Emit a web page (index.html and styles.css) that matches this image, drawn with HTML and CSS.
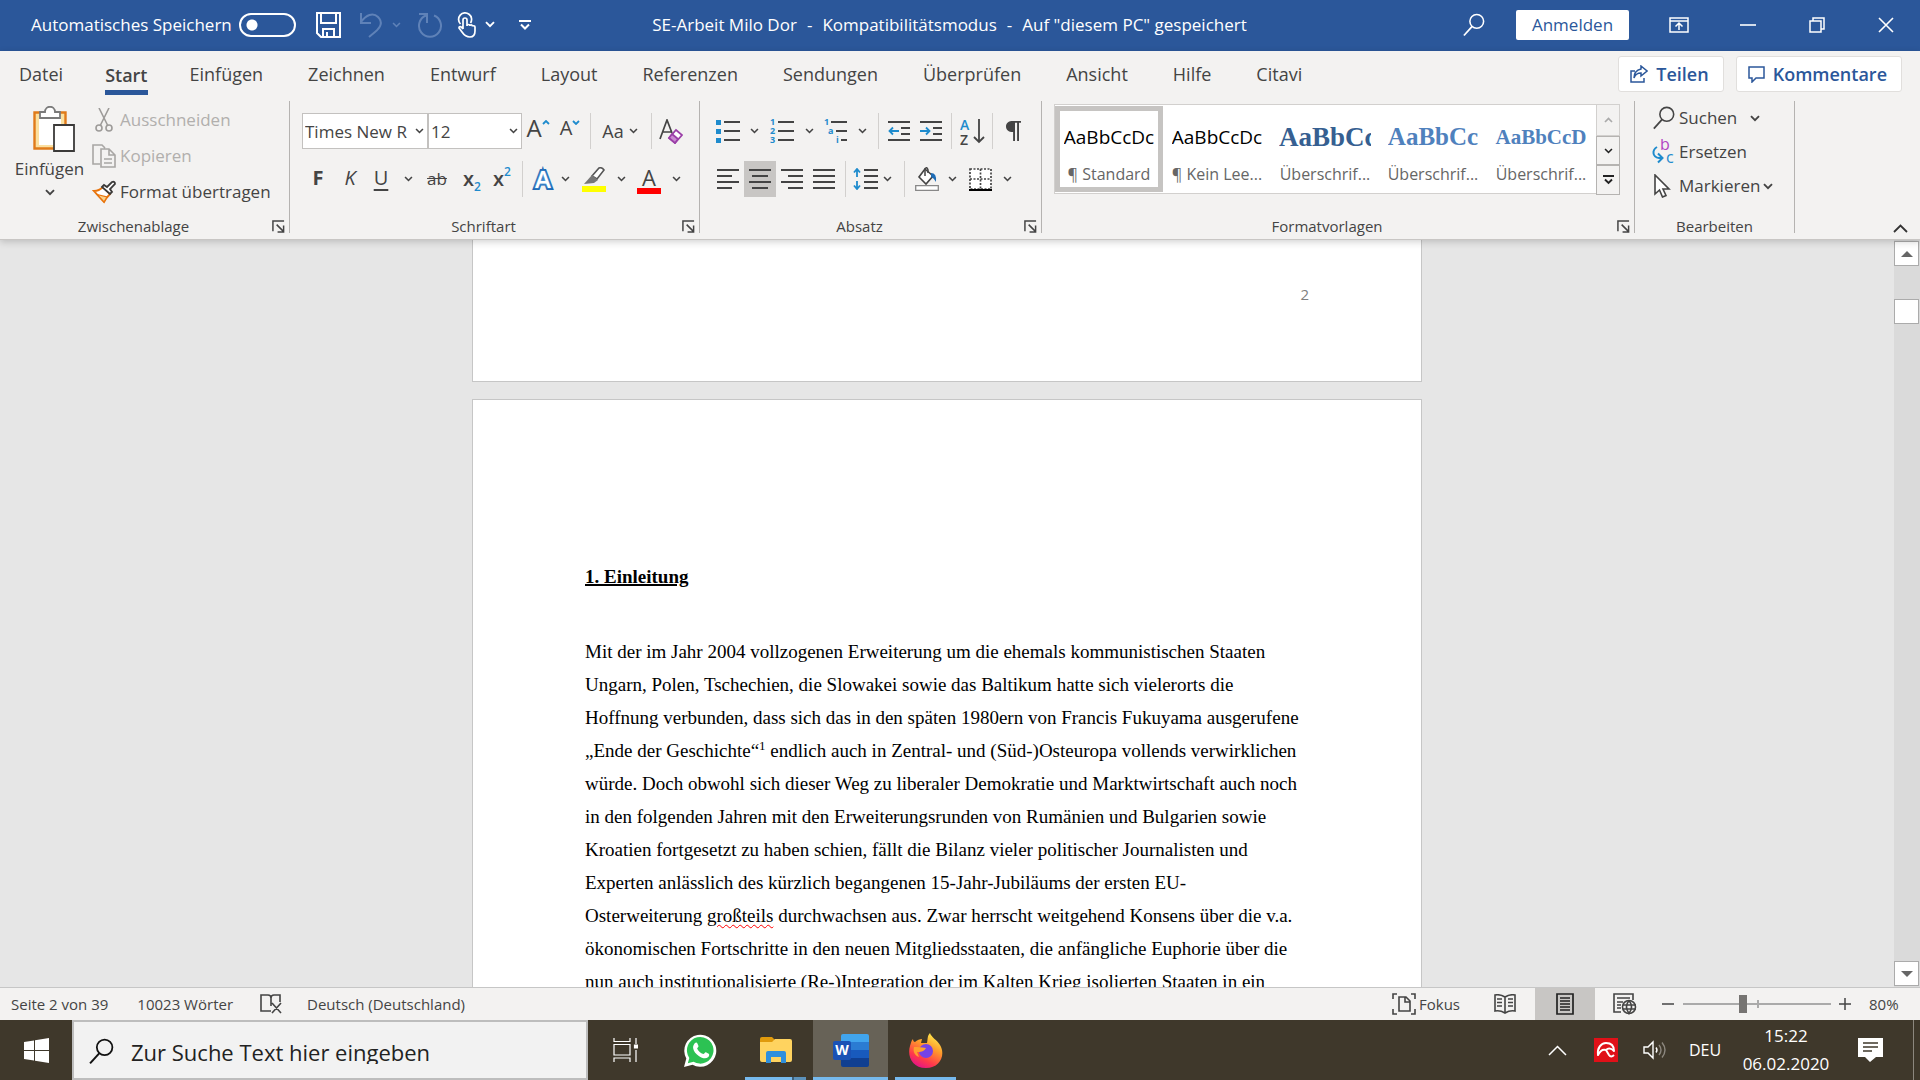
FILE: index.html
```html
<!DOCTYPE html>
<html lang="de">
<head>
<meta charset="utf-8">
<title>SE-Arbeit Milo Dor</title>
<link rel="stylesheet" href="styles.css">
</head>
<body>
<svg class="defs" aria-hidden="true">
  <symbol id="chev" viewBox="0 0 10 7"><path d="M1 1.2 5 5.2 9 1.2" fill="none" stroke="currentColor" stroke-width="1.9"/></symbol>
  <symbol id="launch" viewBox="0 0 14 14"><path d="M1 12V1h12M5 5l7 7M12.500 6v7H6" fill="none" stroke="currentColor" stroke-width="1.6"/></symbol>
  <symbol id="lens" viewBox="0 0 24 26"><circle cx="15" cy="9" r="7.500" fill="none" stroke="currentColor" stroke-width="1.7"/><path d="M10 14.500 1 24.500" stroke="currentColor" stroke-width="1.9"/></symbol>
</svg>

<header class="titlebar">
  <div class="quick">
    <label class="autosave">Automatisches Speichern <input type="checkbox" class="toggle"></label>
    <button class="q-save" aria-label="Speichern"><svg width="25" height="26" viewBox="0 0 25 26" fill="none" stroke="#fff" stroke-width="2"><path d="M1 1h23v24H5l-4-4zM5 1v10h15V1M7 25v-8h11v8M11 25v-5"/></svg></button>
    <button class="q-undo dim" aria-label="Rückgängig"><svg width="24" height="26" viewBox="0 0 24 26" fill="none" stroke="currentColor" stroke-width="2"><path d="M2 1v10h10M2 10C7 3 14 0 19 5s3 10-3 15l-6 5"/></svg></button>
    <button class="q-chev dim" aria-label="Rückgängig-Verlauf"><svg width="9" height="6"><use href="#chev"/></svg></button>
    <button class="q-redo dim" aria-label="Wiederholen"><svg width="26" height="26" viewBox="0 0 26 26" fill="none" stroke="currentColor" stroke-width="2"><path d="M2 2h8v9M9 3.500A11 11 0 1 0 17 3.500"/></svg></button>
    <button class="q-touch" aria-label="Touch-/Mausmodus"><svg width="19" height="26" viewBox="0 0 19 26" fill="none" stroke="#fff" stroke-width="1.700"><path d="M3.500 12A6.500 6.500 0 1 1 13.500 11M6 17V8a1.800 1.800 0 0 1 4 0v6c0-2 3-2 3 0 0-1.500 2.500-1.500 2.500.5 0-1 2.500-1 2.500.5v4c0 4-2 6-5 6-4 0-6-2-8-5l-3-4c0-2 2-2 4 1"/></svg></button>
    <button class="q-chev" aria-label="Modus wählen"><svg width="10" height="7"><use href="#chev"/></svg></button>
    <button class="q-more" aria-label="Symbolleiste anpassen"><svg width="12" height="10" viewBox="0 0 12 10" fill="none" stroke="#fff" stroke-width="2"><path d="M0 1h12M2 4.500l4 4 4-4"/></svg></button>
  </div>
  <h1 class="doc-title"><span>SE-Arbeit Milo Dor</span><span>-</span><span>Kompatibilitätsmodus</span><span>-</span><span>Auf "diesem PC" gespeichert</span></h1>
  <div class="window-tools">
    <button class="find" aria-label="Suchen"><svg width="22" height="26"><use href="#lens"/></svg></button>
    <button class="signin">Anmelden</button>
    <button class="win" aria-label="Menüband-Anzeigeoptionen"><svg width="20" height="16" viewBox="0 0 20 16" fill="none" stroke="#fff" stroke-width="1.500"><path d="M1 1h18v14H1zM1 4h18M10 13V6.500M6.500 9.500l3.500-3.500 3.500 3.500"/></svg></button>
    <button class="win" aria-label="Minimieren"><svg width="16" height="16"><path d="M0 8h16" stroke="#fff" stroke-width="1.600"/></svg></button>
    <button class="win" aria-label="Verkleinern"><svg width="16" height="16" fill="none" stroke="#fff" stroke-width="1.500"><path d="M1 4h11v11H1zM4 4V1h11v11h-3"/></svg></button>
    <button class="win" aria-label="Schließen"><svg width="16" height="16"><path d="m1 1 14 14M15 1 1 15" stroke="#fff" stroke-width="1.600"/></svg></button>
  </div>
</header>

<section class="ribbon">
  <nav class="tabs">
    <a href="#">Datei</a><a href="#" class="active" aria-current="page">Start</a><a href="#">Einfügen</a><a href="#">Zeichnen</a><a href="#">Entwurf</a><a href="#">Layout</a><a href="#">Referenzen</a><a href="#">Sendungen</a><a href="#">Überprüfen</a><a href="#">Ansicht</a><a href="#">Hilfe</a><a href="#">Citavi</a>
    <div class="share">
      <button><svg width="18" height="18" viewBox="0 0 18 18" fill="none" stroke="currentColor" stroke-width="1.500"><path d="M5 6H1v11h13v-4M11 1l6 5-6 5V8C7 8 5 10 4 13c0-5 3-8 7-9z"/></svg>Teilen</button>
      <button><svg width="17" height="17" viewBox="0 0 17 17" fill="none" stroke="currentColor" stroke-width="1.500"><path d="M1 1h15v11H8l-4 4v-4H1z"/></svg>Kommentare</button>
    </div>
  </nav>

  <div class="groups">
    <div class="group g-clip">
      <div class="clip-body">
        <button class="paste">
          <svg class="board" width="42" height="46" viewBox="0 0 42 46"><path d="M1.500 6.500h31v36h-31z" fill="#fbe0a0" stroke="#e07b1a" stroke-width="2.400"/><path d="M6 10h22v29H6z" fill="#fff"/><path d="M7 12V6h5c0-7 10-7 10 0h5v6z" fill="#fff" stroke="#7a7a7a" stroke-width="1.800"/><path d="M21 19h20v26H21z" fill="#fff" stroke="#3b3a39" stroke-width="1.800"/></svg>
          <span>Einfügen</span>
          <svg width="10" height="7"><use href="#chev"/></svg>
        </button>
        <div class="clip-list">
          <button disabled><svg width="24" height="24" viewBox="0 0 24 24" fill="none" stroke="#9d9b99" stroke-width="1.600"><path d="M7 0l9 18M17 0 8 18"/><circle cx="7" cy="20" r="3"/><circle cx="17" cy="20" r="3"/></svg>Ausschneiden</button>
          <button disabled><svg width="24" height="24" viewBox="0 0 24 24" fill="none" stroke="#a8a6a4" stroke-width="1.600"><path d="M8 20H1V1h9l3 3M9 5h8l6 6v12H9zM17 5v6h6M12 15h8M12 19h8"/></svg>Kopieren</button>
          <button><svg width="24" height="24" viewBox="0 0 24 24" fill="none" stroke-width="1.800"><path d="M2 11q5 0 9-4l7 7q-4 4-6 8z" fill="#fff" stroke="#e8740c"/><path d="M5 14.500l10 2.500-3 5z" fill="#fbd28a" stroke="#e8740c" stroke-width="1.200"/><path d="M10 7l2-2 3 2 5-5q3-1 3 2l-5 5 2 3-2 2z" fill="#fff" stroke="#3b3a39"/></svg>Format übertragen</button>
        </div>
      </div>
      <footer><span>Zwischenablage</span><button aria-label="Zwischenablage öffnen"><svg width="13" height="13"><use href="#launch"/></svg></button></footer>
    </div>

    <div class="group g-font">
      <div class="rows">
        <div class="row font-1">
          <label class="combo"><select aria-label="Schriftart"><option>Times New R</option></select><svg width="9" height="6"><use href="#chev"/></svg></label>
          <label class="combo"><select aria-label="Schriftgrad"><option>12</option></select><svg width="9" height="6"><use href="#chev"/></svg></label>
          <button class="grow" aria-label="Schrift vergrößern">A<svg width="8" height="5" viewBox="0 0 8 5"><path d="M1 4l3-3 3 3" fill="none" stroke="#1e8bcd" stroke-width="1.800"/></svg></button>
          <button class="grow small" aria-label="Schrift verkleinern">A<svg width="8" height="5" viewBox="0 0 8 5"><path d="M1 1l3 3 3-3" fill="none" stroke="#1e8bcd" stroke-width="1.800"/></svg></button>
          <i class="sep"></i>
          <button class="case">Aa<svg width="9" height="6"><use href="#chev"/></svg></button>
          <i class="sep"></i>
          <button aria-label="Formatierung löschen"><svg width="24" height="25" viewBox="0 0 24 25" fill="none" stroke-width="1.700"><path d="M1 20 8 1l5 13M3 13h9" stroke="#444"/><path d="M17 11l6 5-7 8-6-5z" fill="#fff" stroke="#9b3fa8"/><path d="M13 15l6 5-3 4-6-5z" fill="#c98ad1" stroke="#9b3fa8"/></svg></button>
        </div>
        <div class="row font-2">
          <button class="bold">F</button>
          <button class="ital">K</button>
          <button class="under">U</button>
          <button aria-label="Unterstreichungsart"><svg width="9" height="6"><use href="#chev"/></svg></button>
          <button class="strike">ab</button>
          <button class="script">x<sub>2</sub></button>
          <button class="script">x<sup>2</sup></button>
          <i class="sep"></i>
          <button class="fx">A</button>
          <button aria-label="Texteffekte wählen"><svg width="9" height="6"><use href="#chev"/></svg></button>
          <button aria-label="Texthervorhebungsfarbe"><svg width="24" height="25" viewBox="0 0 24 25"><path d="M10 9l7-8q3-1 5 2l-7 9z" fill="#fff" stroke="#555" stroke-width="1.600"/><path d="M10 8l6 5-4 3-10 1z" fill="#777"/><path d="M0 19h24v6H0z" fill="#ff0"/></svg></button>
          <button aria-label="Hervorhebungsfarbe wählen"><svg width="9" height="6"><use href="#chev"/></svg></button>
          <button class="fcolor">A</button>
          <button aria-label="Schriftfarbe wählen"><svg width="9" height="6"><use href="#chev"/></svg></button>
        </div>
      </div>
      <footer><span>Schriftart</span><button aria-label="Schriftart öffnen"><svg width="13" height="13"><use href="#launch"/></svg></button></footer>
    </div>

    <div class="group g-para">
      <div class="rows">
        <div class="row para-1">
          <button aria-label="Aufzählungszeichen"><svg width="24" height="24" viewBox="0 0 24 24"><path d="M0 1h5v5H0zM0 10h5v5H0zM0 19h5v5H0z" fill="#1e8bcd"/><path d="M8 3h16M8 12h16M8 21h16" stroke="#444" stroke-width="1.800"/></svg></button>
          <button aria-label="Aufzählungszeichen wählen"><svg width="9" height="6"><use href="#chev"/></svg></button>
          <button aria-label="Nummerierung"><svg class="nums" width="24" height="24" viewBox="0 0 24 24"><text x="0" y="6">1</text><text x="0" y="15">2</text><text x="0" y="24">3</text><path d="M8 3h16M8 12h16M8 21h16" stroke="#444" stroke-width="1.800"/></svg></button>
          <button aria-label="Nummerierung wählen"><svg width="9" height="6"><use href="#chev"/></svg></button>
          <button aria-label="Liste mit mehreren Ebenen"><svg class="nums" width="24" height="24" viewBox="0 0 24 24"><text x="0" y="6">1</text><text x="4" y="15">a</text><text x="12" y="24">i</text><path d="M7 3h16M12 12h11M17 21h6" stroke="#444" stroke-width="1.800"/></svg></button>
          <button aria-label="Ebene wählen"><svg width="9" height="6"><use href="#chev"/></svg></button>
          <i class="sep"></i>
          <button aria-label="Einzug verkleinern"><svg width="22" height="22" viewBox="0 0 22 22" fill="none" stroke="#444" stroke-width="1.800"><path d="M0 2h22M13 8h9M13 14h9M0 20h22"/><path d="M11 11H2M5 7.500 1.500 11 5 14.500" stroke="#1e8bcd"/></svg></button>
          <button aria-label="Einzug vergrößern"><svg width="22" height="22" viewBox="0 0 22 22" fill="none" stroke="#444" stroke-width="1.800"><path d="M0 2h22M13 8h9M13 14h9M0 20h22"/><path d="M0 11h9M6 7.500 9.500 11 6 14.500" stroke="#1e8bcd"/></svg></button>
          <i class="sep"></i>
          <button aria-label="Sortieren"><svg class="sort" width="25" height="27" viewBox="0 0 25 27"><text x="0" y="12" fill="#1e8bcd">A</text><text x="0" y="27" fill="#444">Z</text><path d="M19 1v23M14 19l5 5 5-5" fill="none" stroke="#444" stroke-width="1.800"/></svg></button>
          <i class="sep"></i>
          <button aria-label="Alle anzeigen"><svg width="15" height="20" viewBox="0 0 15 20"><path d="M15 0v1.800h-2V20h-1.900V1.800H9V20H7.100V11C2.500 11 0 9 0 5.500S2.500 0 7 0z" fill="#444"/></svg></button>
        </div>
        <div class="row para-2">
          <button aria-label="Linksbündig"><svg width="22" height="20"><path d="M0 1h22M0 7h15M0 13h22M0 19h15" stroke="#444" stroke-width="1.800"/></svg></button>
          <button class="on" aria-label="Zentriert"><svg width="22" height="20"><path d="M0 1h22M3 7h16M0 13h22M3 19h16" stroke="#444" stroke-width="1.800"/></svg></button>
          <button aria-label="Rechtsbündig"><svg width="22" height="20"><path d="M0 1h22M7 7h15M0 13h22M7 19h15" stroke="#444" stroke-width="1.800"/></svg></button>
          <button aria-label="Blocksatz"><svg width="22" height="20"><path d="M0 1h22M0 7h22M0 13h22M0 19h22" stroke="#444" stroke-width="1.800"/></svg></button>
          <i class="sep"></i>
          <button aria-label="Zeilenabstand"><svg width="25" height="22" viewBox="0 0 25 22" fill="none" stroke="#444" stroke-width="1.800"><path d="M11 2h14M11 8h14M11 14h14M11 20h14"/><path d="M4 1v8M1 4.500 4 1l3 3.500M4 13v8M1 17.500 4 21l3-3.500" stroke="#1e8bcd"/></svg></button>
          <button aria-label="Zeilenabstand wählen"><svg width="9" height="6"><use href="#chev"/></svg></button>
          <i class="sep"></i>
          <button aria-label="Schattierung"><svg width="24" height="24" viewBox="0 0 24 24"><path d="M10 2l8 7-7 8-7-7z" fill="#fff" stroke="#444" stroke-width="1.600"/><path d="M10 9V2q2-3 3 1v3" fill="none" stroke="#444" stroke-width="1.500"/><path d="M16 6q6 0 5 9-2-4-5-5z" fill="#1e6cb5"/><path d="M.7 18.700h22.600v4.600H.7z" fill="#fff" stroke="#888" stroke-width="1.300"/></svg></button>
          <button aria-label="Schattierung wählen"><svg width="9" height="6"><use href="#chev"/></svg></button>
          <button aria-label="Rahmen"><svg width="23" height="23" viewBox="0 0 23 23"><path d="M1 1h21v20H1zM11.500 1v20M1 11h21" fill="#fff" stroke="#444" stroke-width="1.700" stroke-dasharray="2 1.500"/><path d="M0 22h23" stroke="#000" stroke-width="2"/></svg></button>
          <button aria-label="Rahmen wählen"><svg width="9" height="6"><use href="#chev"/></svg></button>
        </div>
      </div>
      <footer><span>Absatz</span><button aria-label="Absatz öffnen"><svg width="13" height="13"><use href="#launch"/></svg></button></footer>
    </div>

    <div class="group g-styles">
      <div class="gallery">
        <button class="style picked"><b>AaBbCcDc</b><span>¶ Standard</span></button>
        <button class="style"><b>AaBbCcDc</b><span>¶ Kein Lee...</span></button>
        <button class="style h-one"><b>AaBbCc</b><span>Überschrif...</span></button>
        <button class="style h-two"><b>AaBbCc</b><span>Überschrif...</span></button>
        <button class="style h-three"><b>AaBbCcD</b><span>Überschrif...</span></button>
        <div class="gal-scroll">
          <button disabled aria-label="Nach oben"><svg width="9" height="6" viewBox="0 0 9 6"><path d="M1 5l3.500-3.500L8 5" fill="none" stroke="#aaa" stroke-width="1.700"/></svg></button>
          <button aria-label="Nach unten"><svg width="9" height="6"><use href="#chev"/></svg></button>
          <button aria-label="Mehr"><svg width="11" height="10" viewBox="0 0 11 10" fill="none" stroke="#222" stroke-width="1.900"><path d="M0 1h11M2 4.500 5.500 8 9 4.500"/></svg></button>
        </div>
      </div>
      <footer><span>Formatvorlagen</span><button aria-label="Formatvorlagen öffnen"><svg width="13" height="13"><use href="#launch"/></svg></button></footer>
    </div>

    <div class="group g-edit">
      <div class="edit-list">
        <button><svg width="24" height="24"><use href="#lens"/></svg>Suchen<svg class="far" width="10" height="7"><use href="#chev"/></svg></button>
        <button><svg class="swap" width="24" height="26" viewBox="0 0 24 26"><text x="8" y="11" fill="#b146c2">b</text><text x="14" y="24" fill="#1e8bcd">c</text><path d="M5 8c-5 3-5 10 2 11h3M6 14.500l4.500 4.500L6 23.500" fill="none" stroke="#1e8bcd" stroke-width="2"/></svg>Ersetzen</button>
        <button><svg width="24" height="24" viewBox="0 0 24 24"><path d="M3 1v19l4.500-4 3 7 3.500-1.500-3-6.500H17z" fill="#fff" stroke="#444" stroke-width="1.600"/></svg>Markieren<svg width="10" height="7"><use href="#chev"/></svg></button>
      </div>
      <footer><span>Bearbeiten</span></footer>
    </div>
    <button class="collapse" aria-label="Menüband reduzieren"><svg width="15" height="9" viewBox="0 0 15 9"><path d="M1 8l6.500-6.500L14 8" fill="none" stroke="#333" stroke-width="1.800"/></svg></button>
  </div>
</section>

<main class="workspace">
  <div class="canvas">
    <article class="page page-end"><p class="folio">2</p></article>
    <article class="page page-text">
      <h2>1. Einleitung</h2>
      <p>Mit der im Jahr 2004 vollzogenen Erweiterung um die ehemals kommunistischen Staaten<br>
      Ungarn, Polen, Tschechien, die Slowakei sowie das Baltikum hatte sich vielerorts die<br>
      Hoffnung verbunden, dass sich das in den späten 1980ern von Francis Fukuyama ausgerufene<br>
      „Ende der Geschichte“<sup>1</sup> endlich auch in Zentral- und (Süd-)Osteuropa vollends verwirklichen<br>
      würde. Doch obwohl sich dieser Weg zu liberaler Demokratie und Marktwirtschaft auch noch<br>
      in den folgenden Jahren mit den Erweiterungsrunden von Rumänien und Bulgarien sowie<br>
      Kroatien fortgesetzt zu haben schien, fällt die Bilanz vieler politischer Journalisten und<br>
      Experten anlässlich des kürzlich begangenen 15-Jahr-Jubiläums der ersten EU-<br>
      Osterweiterung <span class="typo">großteils</span> durchwachsen aus. Zwar herrscht weitgehend Konsens über die v.a.<br>
      ökonomischen Fortschritte in den neuen Mitgliedsstaaten, die anfängliche Euphorie über die<br>
      nun auch institutionalisierte (Re-)Integration der im Kalten Krieg isolierten Staaten in ein</p>
    </article>
  </div>
  <div class="scroller">
    <button aria-label="Nach oben"><svg width="12" height="6"><path d="M0 6 6 0l6 6z" fill="#666"/></svg></button>
    <div class="track"><div class="thumb"></div></div>
    <button aria-label="Nach unten"><svg width="12" height="6"><path d="M0 0l6 6 6-6z" fill="#666"/></svg></button>
  </div>
</main>

<footer class="status">
  <span class="s-page">Seite 2 von 39</span>
  <span class="s-words">10023 Wörter</span>
  <svg class="s-proof" width="22" height="20" viewBox="0 0 22 20" fill="none" stroke="#444" stroke-width="1.600"><path d="M11 17H1V1h7q3 0 3 3v8M11 4q0-3 3-3h6v7M12 9l9 10M21 9l-9 10"/></svg>
  <span>Deutsch (Deutschland)</span>
  <button class="focus"><svg width="24" height="22" viewBox="0 0 24 22" fill="none" stroke="#444" stroke-width="1.600"><path d="M5 1H1v5M19 1h4v5M5 21H1v-5M19 21h4v-5M7 4h7l4 4v10H7zM13 4v5h5"/></svg>Fokus</button>
  <button class="view" aria-label="Lesemodus"><svg width="22" height="20" viewBox="0 0 22 20" fill="none" stroke="#444" stroke-width="1.600"><path d="M11 3Q6 0 1 1v16q5-1 10 2 5-3 10-2V1q-5-1-10 2zv16M3 5h5M3 8.500h5M3 12h5M14 5h5M14 8.500h5M14 12h5"/></svg></button>
  <button class="view on" aria-label="Seitenlayout"><svg width="18" height="22" viewBox="0 0 18 22" fill="none" stroke="#222" stroke-width="1.700"><path d="M1 1h16v20H1zM4 5h10M4 8h10M4 11h10M4 14h10M4 17h10"/></svg></button>
  <button class="view" aria-label="Weblayout"><svg width="24" height="22" viewBox="0 0 24 22" fill="none" stroke="#444" stroke-width="1.600"><path d="M8 19H1V1h19v6M4 5h13M4 9h6M4 12h4M4 15h4"/><circle cx="16" cy="14" r="6.500"/><path d="M10 12h13M10 16h13M16 7.500q-5 6 0 13 5-7 0-13"/></svg></button>
  <button class="step" aria-label="Verkleinern"><svg width="12" height="12"><path d="M0 6h12" stroke="#444" stroke-width="1.500"/></svg></button>
  <input type="range" class="zoom" min="0" max="100" value="40" aria-label="Zoom">
  <button class="step" aria-label="Vergrößern"><svg width="12" height="12"><path d="M0 6h12M6 0v12" stroke="#444" stroke-width="1.500"/></svg></button>
  <span class="pct">80%</span>
</footer>

<footer class="taskbar">
  <button class="start" aria-label="Start"><svg width="25" height="25" viewBox="0 0 25 25" fill="#fff"><path d="M0 4l10-1.500V12H0zM11 2.300 25 0v12H11zM0 13h10v9.500L0 21zM11 13h14v12l-14-2.300z"/></svg></button>
  <label class="search"><svg width="25" height="27"><use href="#lens"/></svg><input type="text" placeholder="Zur Suche Text hier eingeben" aria-label="Suche"></label>
  <button class="task" aria-label="Taskansicht"><svg width="25" height="24" viewBox="0 0 25 24" fill="none" stroke="#fff" stroke-width="1.200"><path d="M1 0v3.500h16V0M1 6.500h16v10.500H1zM1 24v-4h16v4M23 0v6M23 12v12"/><path d="M21.500 7h3v3h-3z" fill="#fff"/></svg></button>
  <button class="task" aria-label="WhatsApp"><svg width="33" height="33" viewBox="0 0 33 33"><path d="M0 33l2.300-8.500A16 16 0 1 1 8.500 30.700z" fill="#fff"/><path d="M3.800 29.200l1.500-5.300A13.300 13.300 0 1 1 9.500 27.800z" fill="#2cc253"/><path d="M11 9c1-1 2-.6 2.400.4l1.100 2.700c.2.800-1.500 2-1.300 2.600 1.300 2.700 3.300 4.400 6.100 5.400.8.200 1.700-2.200 2.600-1.800l2.800 1.400c1 .5.500 2.600-.7 3.600-2.400 2-6 .9-9.200-1.300-3-2-5.300-5-5.700-8-.2-2 .8-3.900 1.900-5z" fill="#fff"/></svg></button>
  <button class="task open stacked" aria-label="Explorer"><svg width="32" height="27" viewBox="0 0 32 27"><path d="M0 2q0-2 2-2h10l3 3v4H0z" fill="#e09a0c"/><path d="M0 5h12l3-3h15q2 0 2 2v19q0 2-2 2H2q-2 0-2-2z" fill="#ffd35f"/><path d="M6 26V16q0-2 2-2h16q2 0 2 2v10h-5v-6H11v6z" fill="#2f8fdc"/></svg></button>
  <button class="task open current" aria-label="Word"><svg width="36" height="33" viewBox="0 0 36 33"><path d="M10 0h24q2 0 2 2v7H8V2q0-2 2-2z" fill="#41a5ee"/><path d="M8 8h28v9H8z" fill="#2b7cd3"/><path d="M8 16h28v8H8z" fill="#185abd"/><path d="M8 24h28v7q0 2-2 2H10q-2 0-2-2z" fill="#103f91"/><rect y="7" width="18" height="19" rx="2" fill="#1a52b5"/><text x="9" y="21" text-anchor="middle" class="word-w">W</text></svg></button>
  <button class="task open" aria-label="Firefox"><svg width="34" height="35" viewBox="0 0 34 35"><defs><linearGradient id="ff" x1=".8" y1="0" x2=".3" y2="1"><stop offset="0" stop-color="#fff44f"/><stop offset=".4" stop-color="#ff9a2b"/><stop offset=".75" stop-color="#ff3a4a"/><stop offset="1" stop-color="#e3128a"/></linearGradient></defs><path d="M21 0c1 4 7 7 10 12 6 10 0 23-14 23S-2 23 1 13c1-3 1-5 3-7 0 2 1 3 2 3 2-2 5-3 7-3l-1 4 6 0c1-4 0-7 3-10z" fill="url(#ff)"/><circle cx="17" cy="18" r="7" fill="#7543e5"/><path d="M5 14c4 0 7 0 12 1-2 4-6 4-9 4l2 5c-5-2-6-6-5-10z" fill="#ffa02e"/></svg></button>
  <div class="tray">
    <button class="t-up" aria-label="Ausgeblendete Symbole"><svg width="19" height="11" viewBox="0 0 19 11"><path d="M1 10l8.500-8.500L18 10" fill="none" stroke="#fff" stroke-width="1.500"/></svg></button>
    <button class="t-av" aria-label="Avira"><svg width="24" height="24" viewBox="0 0 24 24"><path d="M0 0h24v24H0z" fill="#e01018"/><path d="M4 17C3 10 7 5 12 5c5 0 8 3 8 8-3-3-6-3-8-1-3-1-6 1-8 5zM12 12l3 5q2 3 5 0" fill="none" stroke="#fff" stroke-width="2" stroke-linejoin="round"/></svg></button>
    <button class="t-vol" aria-label="Lautstärke"><svg width="24" height="20" viewBox="0 0 24 20" fill="none" stroke="#fff" stroke-width="1.400"><path d="M1 7h4l5-5v16l-5-5H1zM13 7.500q2 2.500 0 5"/><path d="M16 5q4 5 0 10M19 2.500q6 7.500 0 15" stroke="#8c877e"/></svg></button>
    <span class="lang">DEU</span>
    <time class="clock"><span>15:22</span><span>06.02.2020</span></time>
    <button class="t-note" aria-label="Benachrichtigungen"><svg width="25" height="24" viewBox="0 0 25 24"><path d="M0 0h25v19h-7l-6 5-5-5H0z" fill="#fff"/><path d="M5 5h15M5 9h15M5 13h9" stroke="#3f382b" stroke-width="1.300"/></svg></button>
    <i class="peek"></i>
  </div>
</footer>
</body>
</html>
```
FILE: styles.css
```css
* { box-sizing: border-box; }

body {
  margin: 0;
  height: 100vh;
  display: flex;
  flex-direction: column;
  overflow: hidden;
  background: #e6e6e6;
  color: #444;
  font: 17px/24px "Open Sans", "Noto Sans", sans-serif;
}

button, input, select { font: inherit; color: inherit; }
button {
  display: flex;
  align-items: center;
  justify-content: center;
  padding: 0;
  border: 0;
  background: none;
  white-space: nowrap;
}
svg { flex: none; display: block; }
.defs { position: absolute; width: 0; height: 0; }
p, h1, h2 { margin: 0; }

/* Title bar */
.titlebar {
  display: grid;
  grid-template-columns: 1fr auto 1fr;
  align-items: center;
  height: 51px;
  padding-bottom: 2px;
  background: #2b579a;
  color: #fff;
}
.quick { display: flex; align-items: center; padding-left: 31px; }
.autosave { display: flex; align-items: center; gap: 7px; white-space: nowrap; }
.toggle {
  appearance: none;
  width: 57px;
  height: 24px;
  margin: 0;
  border: 2px solid #fff;
  border-radius: 12px;
  background: radial-gradient(circle 6px at 11px 10px, #fff 5px, transparent 6px);
}
.q-save { margin-left: 20px; }
.q-undo { margin-left: 18px; }
.q-chev { margin-left: 9px; }
.q-redo { margin-left: 16px; }
.q-touch { margin-left: 14px; }
.q-more { margin-left: 24px; }
.dim { color: #5f82b8; }
.doc-title {
  display: flex;
  gap: 10px;
  margin-right: 21px;
  font-size: 17px;
  font-weight: 400;
  white-space: nowrap;
}
.window-tools { display: flex; align-items: center; justify-content: flex-end; }
.find { width: 60px; }
.signin {
  width: 113px;
  height: 30px;
  margin: 0 15px 0 12px;
  border-radius: 2px;
  background: #fff;
  color: #2b579a;
}
.win { width: 69px; height: 48px; }

/* Ribbon */
.ribbon {
  position: relative;
  z-index: 1;
  background: #f3f2f1;
  border-bottom: 1px solid #c8c6c4;
  box-shadow: 0 2px 7px rgba(0, 0, 0, .18);
}
.tabs {
  display: flex;
  align-items: center;
  gap: 45px;
  height: 46px;
  padding: 0 18px 0 19px;
  font-size: 18px;
}
.tabs a {
  display: flex;
  height: 42px;
  padding-top: 9px;
  color: #444;
  text-decoration: none;
}
.tabs .active { height: 41px; border-bottom: 5px solid #2b579a; font-weight: 600; margin-right: -3px; margin-left: -3px; }
.share { display: flex; gap: 12px; margin-left: auto; }
.share button {
  gap: 8px;
  height: 36px;
  padding: 0 14px 0 11px;
  border: 1px solid #e1dfdd;
  border-radius: 3px;
  background: #fff;
  color: #2b579a;
  font-weight: 600;
}
.groups { display: flex; height: 142px; padding: 4px 0 6px; }
.group {
  display: flex;
  flex-direction: column;
  justify-content: space-between;
  flex: none;
  border-right: 1px solid #b5b3b1;
}
.group footer {
  display: grid;
  grid-template-columns: 1fr 22px;
  align-items: center;
  height: 20px;
  margin-bottom: -3px;
  font-size: 15px;
  line-height: 18px;
}
.group footer span { text-align: center; }
.group footer span:only-child { grid-column: 1 / -1; }
.g-clip { width: 290px; }
.g-font { width: 410px; }
.g-para { width: 342px; }
.g-styles { width: 593px; }
.g-edit { width: 160px; }

.clip-body { display: flex; padding: 1px 0 0 8px; }
.paste { flex-direction: column; justify-content: flex-start; width: 83px; padding-top: 4px; }
.paste .board { margin-left: 8px; }
.paste span { margin: 5px 0 8px; }
.clip-list { display: flex; flex-direction: column; margin-left: 1px; }
.clip-list button { gap: 4px; height: 36px; justify-content: flex-start; }
.clip-list button:disabled { color: #b1afad; }

.rows { display: grid; gap: 12px; padding: 12px 0 0 12px; }
.row { display: grid; height: 36px; align-items: stretch; }
.sep { width: 1px; justify-self: center; background: #d2d0ce; }
.font-1 { grid-template-columns: 126px 94px 32px 32px 8px 52px 10px 30px; }
.font-2 { grid-template-columns: 32px 32px 30px 24px 34px 36px 24px 16px 26px 19px 38px 16px 40px 14px; }
.para-1 { grid-template-columns: 31px 22px 34px 20px 33px 20px 12px 30px 34px 7px 34px 7px 34px; }
.para-2 { grid-template-columns: 32px 32px 32px 32px 10px 30px 14px 20px 26px 24px 32px 22px; }
.combo { display: grid; align-items: center; height: 36px; }
.combo > * { grid-area: 1 / 1; }
.combo select {
  appearance: none;
  width: 100%;
  height: 36px;
  padding: 1px 2px 0;
  border: 1px solid #c3c1bf;
  border-radius: 0;
  background: #fff;
}
.combo svg { justify-self: end; margin-right: 4px; }
.grow { align-items: flex-start; font-size: 24px; line-height: 30px; }
.grow svg { margin-top: 7px; }
.grow.small { font-size: 20px; }
.case { gap: 5px; font-size: 18px; }
.bold, .ital, .under { padding-bottom: 3px; font-size: 20px; }
.bold { font-weight: 700; }
.ital { font-style: italic; }
.under { text-decoration: underline; text-underline-offset: 4px; }
.strike { text-decoration: line-through; }
.script { font-size: 20px; font-weight: 600; }
.script sub, .script sup { color: #1e8bcd; font-size: 12px; line-height: 1; }
.script sub { margin-top: 16px; }
.script sup { margin-bottom: 14px; }
.fx { color: #fff; font-size: 24px; font-weight: 600; -webkit-text-stroke: 4px #1a66b3; paint-order: stroke fill; text-shadow: 0 0 3px #7dbdf0; }
.fcolor { font-size: 22px; align-items: flex-start; line-height: 26px; place-self: center; width: 24px; height: 30px; border-bottom: 6px solid #f00; }
.row .on { background: #c8c6c4; }
.nums text { fill: #1e8bcd; font-size: 9px; font-weight: 700; }
.sort text { font-size: 14px; font-weight: 600; }

.gallery {
  display: flex;
  height: 90px;
  margin: 3px 0 0 12px;
  width: 566px;
  border: 1px solid #d2d0ce;
  background: #fff;
}
.style {
  flex-direction: column;
  justify-content: flex-start;
  width: 108px;
  height: 86px;
  margin-top: 1px;
  padding-top: 17px;
  overflow: hidden;
  font-size: 16px;
}
.style b { height: 30px; max-width: 92px; overflow: hidden; color: #000; font-size: 19px; line-height: 28px; font-weight: 400; }
.style span { margin-top: 9px; color: #666; }
.picked { border: 5px solid #c6c4c2; padding-top: 12px; }
.h-one b, .h-two b, .h-three b { color: #4f81bd; font-family: "Liberation Serif", serif; font-weight: 700; }
.h-one b { color: #365f91; font-size: 27px; }
.h-two b { font-size: 25px; }
.h-three b { font-size: 21px; }
.gal-scroll { display: grid; grid-template-rows: 32px 29px 30px; flex: 1; margin: -1px -1px -1px 1px; }
.gal-scroll button { border: 1px solid #b5b3b1; background: #f3f2f1; color: #222; }
.gal-scroll button:disabled { border-color: #d2d0ce; }

.edit-list { display: grid; gap: 10px; padding: 5px 0 0 17px; }
.edit-list button { justify-content: flex-start; gap: 3px; height: 24px; }
.edit-list .far { margin-left: 10px; }
.swap text { font-size: 16px; }
.collapse { align-self: flex-end; margin: 0 12px 0 auto; }

/* Document */
.workspace { display: flex; flex: 1; min-height: 0; }
.canvas { flex: 1; overflow: hidden; }
.page { width: 950px; margin: 0 auto; padding: 0 112px; border: 1px solid #c6c6c6; background: #fff; color: #000; }
.page-end { height: 142px; margin-bottom: 17px; border-top: 0; padding-top: 42px; }
.folio { color: #7f7f7f; font-size: 15px; text-align: right; }
.page-text { height: 1344px; padding-top: 160px; font: 19px/33px "Liberation Serif", serif; white-space: nowrap; }
.page-text h2 { margin-bottom: 42px; font-size: 19px; text-decoration: underline; text-decoration-thickness: 2px; }
.page-text sup { font-size: 13px; line-height: 0; }
.typo { text-decoration: underline wavy #f00 1px; text-underline-offset: 2px; }
.scroller { display: flex; flex-direction: column; width: 26px; padding: 1px 1px 1px 0; background: #dadada; }
.scroller button, .thumb { height: 25px; border: 1px solid #ababab; background: #fff; }
.track { flex: 1; padding-top: 33px; }

/* Status bar */
.status {
  display: flex;
  align-items: center;
  height: 33px;
  padding: 0 0 1px 11px;
  border-top: 1px solid #c6c6c6;
  background: #f3f2f1;
  font-size: 15px;
  white-space: nowrap;
}
.s-page { margin-right: 29px; }
.s-words { margin-right: 27px; }
.s-proof { margin-right: 25px; }
.focus { gap: 3px; margin-left: auto; margin-right: 15px; }
.view { width: 60px; height: 32px; }
.view.on { background: #c8c6c4; }
.step { width: 12px; }
.view + .step { margin-left: 7px; }
.zoom {
  appearance: none;
  width: 148px;
  height: 18px;
  margin: 0 8px 0 9px;
  background:
    linear-gradient(#aaa, #aaa) 74px 5px / 2px 8px no-repeat,
    linear-gradient(#aaa, #aaa) 0 8px / 100% 2px no-repeat;
}
.zoom::-webkit-slider-thumb { appearance: none; width: 8px; height: 18px; background: #767472; }
.pct { width: 69px; padding-left: 18px; }

/* Taskbar */
.taskbar { display: flex; height: 60px; background: #3f382b; color: #fff; }
.start { width: 72px; }
.search {
  display: flex;
  align-items: center;
  gap: 17px;
  width: 516px;
  padding: 3px 0 0 15px;
  border: 2px solid #bdbdbd;
  background: #f2f2f2;
  color: #111;
  font-size: 22px;
}
.search input { flex: 1; min-width: 0; padding: 0; border: 0; background: none; }
.search input::placeholder { color: #222; opacity: 1; }
.task { width: 75px; }
.open { background: linear-gradient(#76b9ed, #76b9ed) center bottom / 61px 3px no-repeat; }
.stacked { background: linear-gradient(90deg, #76b9ed 47px, #3f5f78 47px, #3f5f78 49px, #5c91ba 49px) center bottom / 61px 3px no-repeat; }
.current { background: linear-gradient(#76b9ed, #76b9ed) center bottom / 100% 3px no-repeat, #676257; }
.word-w { fill: #fff; font-size: 14px; font-weight: 700; }
.tray { display: flex; align-items: center; margin-left: auto; }
.t-up { margin-right: 27px; }
.t-av { margin-right: 25px; }
.t-vol { margin-right: 22px; }
.lang { width: 36px; margin-right: 13px; font-size: 16px; }
.clock { display: grid; width: 96px; margin-right: 24px; text-align: center; line-height: 28px; }
.t-note { margin-right: 30px; }
.peek { width: 1px; height: 60px; margin-right: 6px; background: #8c877e; }
```
